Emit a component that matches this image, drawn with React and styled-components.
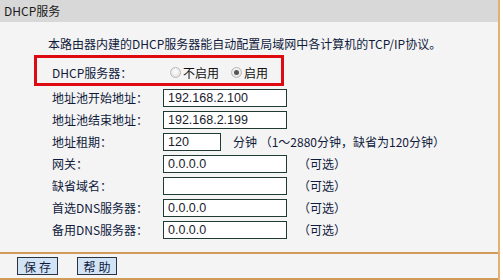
import styled, { createGlobalStyle } from "styled-components";

const GlobalStyle = createGlobalStyle`
  html, body {
    margin: 0;
    padding: 0;
    background: #ffffff;
  }
  body {
    font-family: "Noto Sans CJK SC", "DejaVu Sans", sans-serif;
    font-size: 12px;
    color: #101a3c;
  }
`;

const Panel = styled.div`
  width: 500px;
  box-sizing: border-box;
  border-right: 2px solid #e2b272;
  background: #f4f4f4;
`;

const Header = styled.div`
  height: 22px;
  line-height: 22px;
  padding-left: 4px;
  background: #d8d8d8;
  color: #1a1a1a;
`;

const Content = styled.div`
  display: flex;
  flex-direction: column;
  padding-bottom: 9px;
`;

const Intro = styled.div`
  height: 22px;
  line-height: 22px;
  margin-top: 11px;
  padding-left: 48px;
  white-space: nowrap;
`;

const Highlight = styled.div`
  display: flex;
  align-items: center;
  box-sizing: border-box;
  width: 250px;
  height: 31px;
  margin-left: 34px;
  padding: 3px 0 0 15px;
  border: 3px solid #dd0a12;
`;

const SwitchLabel = styled.span`
  width: 118px;
  white-space: nowrap;
`;

const RadioOption = styled.label`
  display: flex;
  align-items: center;
  gap: 2px;
  margin-right: 12px;
  color: #111;
  white-space: nowrap;
`;

const RadioDot = styled.span`
  width: 9px;
  height: 9px;
  border-radius: 50%;
  border: 1px solid #b8b8b8;
  background: radial-gradient(circle at 50% 40%, #ffffff 0%, #e6e6e6 70%, #d0d0d0 100%);
  display: flex;
  align-items: center;
  justify-content: center;

  &::after {
    content: "";
    width: 5px;
    height: 5px;
    border-radius: 50%;
    background: ${({ $checked }) => ($checked ? "#555" : "transparent")};
  }
`;

const Rows = styled.div`
  display: flex;
  flex-direction: column;
  margin-top: 3px;
  padding-left: 52px;
`;

const Row = styled.div`
  display: flex;
  align-items: flex-start;
  height: 22px;
`;

const Label = styled.span`
  width: 111px;
  height: 17px;
  line-height: 17px;
  white-space: nowrap;
`;

const Field = styled.input`
  box-sizing: border-box;
  width: ${({ $w }) => $w || 124}px;
  height: 18px;
  margin: 0;
  padding: 0 0 0 4px;
  border: 1px solid #1f3b34;
  background: #fff;
  font-family: "Liberation Sans", Arial, sans-serif;
  font-size: 12.5px;
  color: #1a1a2a;
  outline: none;
`;

const Note = styled.span`
  height: 17px;
  line-height: 17px;
  margin-left: ${({ $gap }) => $gap || 11}px;
  white-space: nowrap;
`;

const Footer = styled.div`
  display: flex;
  align-items: center;
  gap: 19px;
  height: 24px;
  padding-left: 17px;
  border-top: 2px solid #d09a58;
  border-bottom: 2px solid #d09a58;
`;

const Button = styled.button`
  box-sizing: border-box;
  width: ${({ $w }) => $w || 41}px;
  height: 18px;
  padding: 0;
  border: 1px solid #2b3340;
  background: #d2e3f6;
  font-family: "Noto Sans CJK SC", sans-serif;
  font-size: 12px;
  letter-spacing: 3px;
  text-indent: 3px;
  color: #101a3c;
`;

const fields = [
  { label: "地址池开始地址：", value: "192.168.2.100" },
  { label: "地址池结束地址：", value: "192.168.2.199" },
  { label: "地址租期：", value: "120", w: 58, note: "分钟 （1～2880分钟，缺省为120分钟）", gap: 12 },
  { label: "网关：", value: "0.0.0.0", note: "（可选）" },
  { label: "缺省域名：", value: "", note: "（可选）" },
  { label: "首选DNS服务器：", value: "0.0.0.0", note: "（可选）" },
  { label: "备用DNS服务器：", value: "0.0.0.0", note: "（可选）" },
];

export default function App() {
  return (
    <>
      <GlobalStyle />
      <Panel>
        <Header>DHCP服务</Header>
        <Content>
          <Intro>本路由器内建的DHCP服务器能自动配置局域网中各计算机的TCP/IP协议。</Intro>
          <Highlight>
            <SwitchLabel>DHCP服务器：</SwitchLabel>
            <RadioOption>
              <RadioDot />
              不启用
            </RadioOption>
            <RadioOption>
              <RadioDot $checked />
              启用
            </RadioOption>
          </Highlight>
          <Rows>
            {fields.map((f) => (
              <Row key={f.label}>
                <Label>{f.label}</Label>
                <Field $w={f.w} defaultValue={f.value} readOnly />
                {f.note && <Note $gap={f.gap}>{f.note}</Note>}
              </Row>
            ))}
          </Rows>
        </Content>
        <Footer>
          <Button>保存</Button>
          <Button $w={40}>帮助</Button>
        </Footer>
      </Panel>
    </>
  );
}
